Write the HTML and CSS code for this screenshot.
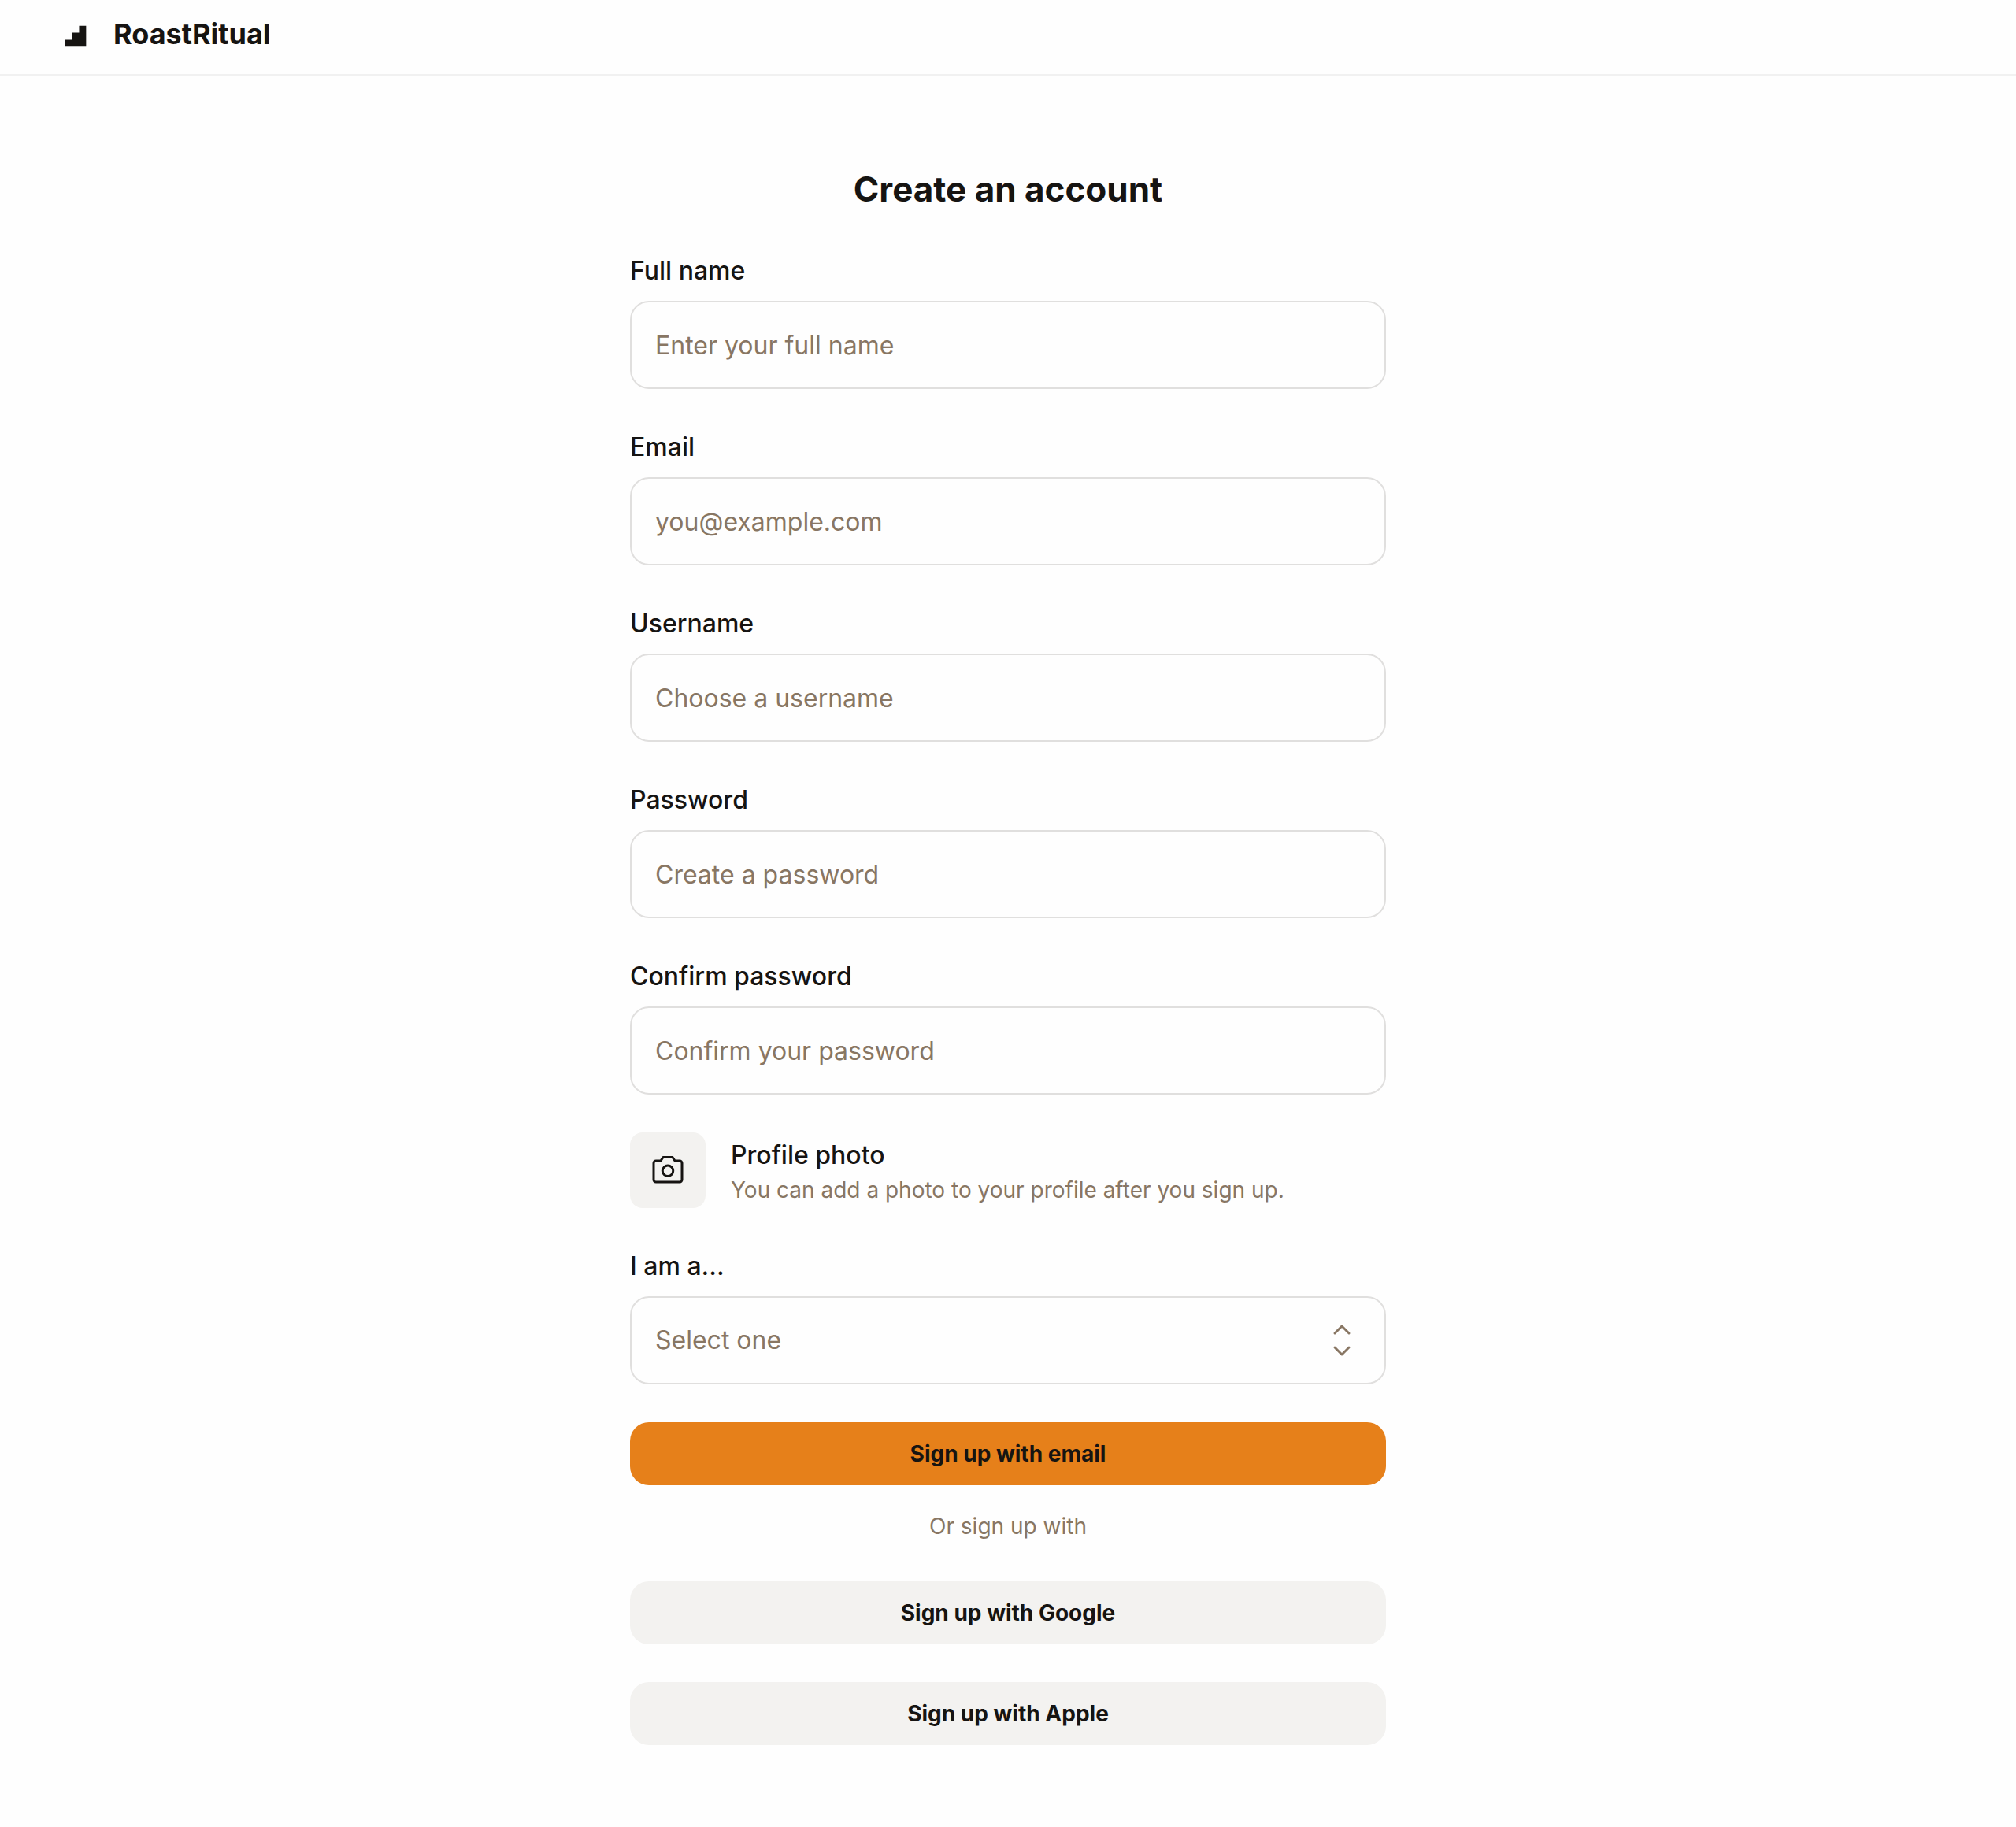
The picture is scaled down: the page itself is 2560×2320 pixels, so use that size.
FILE: index.html
```html
<!DOCTYPE html>
<html lang="en">
<head>
<meta charset="utf-8">
<meta name="viewport" content="width=device-width, initial-scale=1">
<title>RoastRitual – Create an account</title>
<link rel="stylesheet" href="styles.css">
</head>
<body>
<header class="site-header">
  <svg class="logo" viewBox="0 0 48 48" aria-hidden="true"><path fill="currentColor" d="M44 4H30.667V17.333H17.333V30.667H4V44H44Z"/></svg>
  <span class="brand">RoastRitual</span>
</header>
<main class="signup">
  <h1 class="title">Create an account</h1>
  <form class="form">
    <div class="field">
      <label for="full-name">Full name</label>
      <input class="control" id="full-name" type="text" placeholder="Enter your full name">
    </div>
    <div class="field">
      <label for="email">Email</label>
      <input class="control" id="email" type="email" placeholder="you@example.com">
    </div>
    <div class="field">
      <label for="username">Username</label>
      <input class="control" id="username" type="text" placeholder="Choose a username">
    </div>
    <div class="field">
      <label for="password">Password</label>
      <input class="control" id="password" type="password" placeholder="Create a password">
    </div>
    <div class="field">
      <label for="confirm">Confirm password</label>
      <input class="control" id="confirm" type="password" placeholder="Confirm your password">
    </div>
    <div class="photo">
      <div class="photo-icon">
        <svg class="icon" viewBox="0 0 256 256" aria-hidden="true"><path fill="currentColor" d="M208,56H180.28L166.65,35.56A8,8,0,0,0,160,32H96a8,8,0,0,0-6.65,3.56L75.71,56H48A24,24,0,0,0,24,80V192a24,24,0,0,0,24,24H208a24,24,0,0,0,24-24V80A24,24,0,0,0,208,56Zm8,136a8,8,0,0,1-8,8H48a8,8,0,0,1-8-8V80a8,8,0,0,1,8-8H80a8,8,0,0,0,6.66-3.56L100.28,48h55.43l13.63,20.44A8,8,0,0,0,176,72h32a8,8,0,0,1,8,8ZM128,88a44,44,0,1,0,44,44A44.05,44.05,0,0,0,128,88Zm0,72a28,28,0,1,1,28-28A28,28,0,0,1,128,160Z"/></svg>
      </div>
      <div class="photo-text">
        <p class="photo-title">Profile photo</p>
        <p class="note">You can add a photo to your profile after you sign up.</p>
      </div>
    </div>
    <div class="field">
      <label for="role">I am a...</label>
      <div class="select-wrap">
        <select class="control" id="role"><option>Select one</option></select>
        <svg class="icon select-icon" viewBox="0 0 256 256" aria-hidden="true"><path fill="currentColor" d="M181.66,170.34a8,8,0,0,1,0,11.32l-48,48a8,8,0,0,1-11.32,0l-48-48a8,8,0,0,1,11.32-11.32L128,212.69l42.34-42.35A8,8,0,0,1,181.66,170.34Zm-96-84.68L128,43.31l42.34,42.35a8,8,0,0,0,11.32-11.32l-48-48a8,8,0,0,0-11.32,0l-48,48A8,8,0,0,0,85.66,85.66Z"/></svg>
      </div>
    </div>
    <button class="button primary" type="submit">Sign up with email</button>
    <p class="note divider">Or sign up with</p>
    <button class="button" type="button">Sign up with Google</button>
    <button class="button" type="button">Sign up with Apple</button>
  </form>
</main>
</body>
</html>
```
FILE: styles.css
```css
:root {
  --ink: #161412;
  --muted: #887663;
  --line: #e0dfde;
  --fill: #f3f2f0;
  --accent: #e6801a;
}

* { box-sizing: border-box; }

body {
  margin: 0;
  background: #fefefe;
  color: var(--ink);
  font-family: Inter, "Noto Sans", sans-serif;
  font-size: 32px;
  line-height: 48px;
}

h1, p { margin: 0; }

.site-header {
  display: flex;
  align-items: flex-start;
  gap: 32px;
  padding: 20px 80px 28px;
  border-bottom: 2px solid #f1f1f1;
}

.logo {
  width: 32px;
  height: 32px;
  margin-top: 10px;
}

.brand {
  font-size: 36px;
  font-weight: 700;
  line-height: 46px;
}

.signup {
  max-width: 1024px;
  margin: 0 auto;
  padding: 116px 32px 104px;
}

.title {
  margin-bottom: 50px;
  font-size: 44px;
  font-weight: 700;
  line-height: 56px;
  text-align: center;
}

.form {
  display: flex;
  flex-direction: column;
  gap: 48px;
}

.field {
  display: flex;
  flex-direction: column;
  gap: 14px;
}

.field label, .photo-title {
  padding-top: 2px;
  font-weight: 500;
}

.control {
  display: block;
  width: 100%;
  height: 112px;
  padding: 0 30px;
  border: 2px solid var(--line);
  border-radius: 24px;
  background: transparent;
  color: var(--ink);
  font: inherit;
  appearance: none;
}

.control::placeholder { color: var(--muted); opacity: 1; }

.select-wrap { position: relative; color: var(--muted); }
.select-wrap .control { color: var(--muted); }

.icon {
  display: block;
  width: 48px;
  height: 48px;
}

.select-icon {
  position: absolute;
  top: 32px;
  right: 32px;
  pointer-events: none;
}

.photo {
  display: flex;
  align-items: center;
  gap: 32px;
}

.photo-icon {
  display: grid;
  place-items: center;
  flex: none;
  width: 96px;
  height: 96px;
  border-radius: 16px;
  background: var(--fill);
}

.note {
  color: var(--muted);
  font-size: 28px;
  line-height: 40px;
}

.divider {
  margin: -16px 0 2px;
  text-align: center;
}

.button {
  height: 80px;
  padding: 0 32px;
  border: 0;
  border-radius: 24px;
  background: var(--fill);
  color: var(--ink);
  font: inherit;
  font-size: 28px;
  font-weight: 700;
  cursor: pointer;
}

.primary { background: var(--accent); }
```
